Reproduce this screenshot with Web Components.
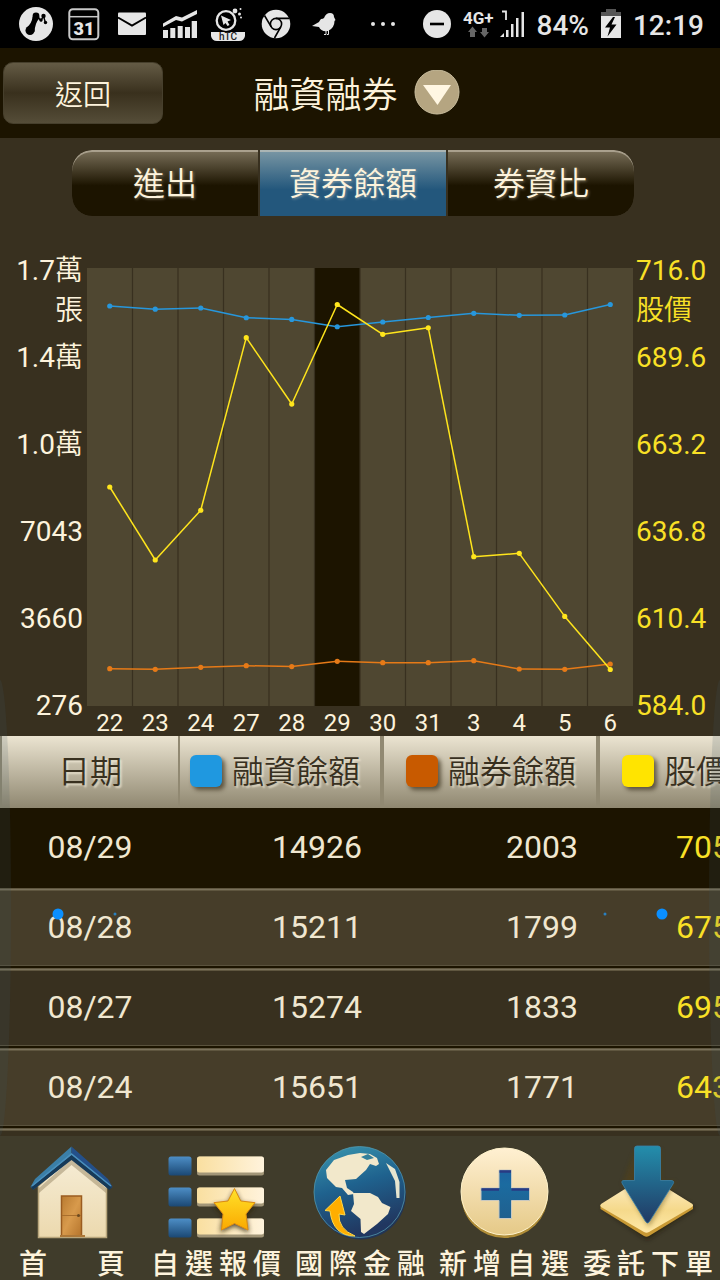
<!DOCTYPE html>
<html lang="zh-Hant">
<head>
<meta charset="utf-8">
<meta name="viewport" content="width=device-width, initial-scale=1">
<title>融資融券</title>
<style>
    html, body {
        margin: 0;
        padding: 0;
    }

    body {
        --cream: #fdf3dc;
        --dark: #1c1400;
        --page: #38301f;
        --margin-color: #1f98e0;
        --short-color: #c85a00;
        --price-color: #ffe400;
        background: var(--page);
        color: var(--cream);
        font-family: Roboto, "Noto Sans CJK TC", sans-serif;
    }
</style>
</head>
<body>

<stock-app>
    <status-bar slot="status"></status-bar>

    <page-header slot="header">
        <span slot="back">返回</span>
        <span slot="title">融資融券</span>
    </page-header>

    <tab-bar slot="tabs">
        <tab-button>進出</tab-button>
        <tab-button selected>資券餘額</tab-button>
        <tab-button>券資比</tab-button>
    </tab-bar>

    <balance-chart slot="chart"></balance-chart>
    <balance-table slot="table"></balance-table>

    <nav-bar slot="nav">
        <nav-item icon="home" short>首 頁</nav-item>
        <nav-item icon="list">自選報價</nav-item>
        <nav-item icon="globe">國際金融</nav-item>
        <nav-item icon="plus">新增自選</nav-item>
        <nav-item icon="order">委託下單</nav-item>
    </nav-bar>
</stock-app>


<template id="stock-app-template">
    <style>
        :host {
            display: flex;
            flex-direction: column;
            min-height: 100vh;
            position: relative;
            overflow: hidden;
        }

        .list {
            flex: 1 1 0;
            min-height: 400px;
            overflow: hidden;
        }

        /* edge glow and dots that float over the list */
        .glow {
            position: absolute;
            top: 680px;
            width: 22px;
            height: 456px;
            border-radius: 50%;
            background: rgba(60, 90, 100, 0.16);
            pointer-events: none;
        }

        .glow.left { left: -11px; }
        .glow.right { right: -11px; }

        .dot {
            position: absolute;
            top: 914px;
            width: 11px;
            height: 11px;
            border-radius: 50%;
            background: #0a8fff;
            transform: translate(-50%, -50%);
            pointer-events: none;
        }

        .dot.small {
            width: 3px;
            height: 3px;
            background: #2a80c0;
        }
    </style>

    <slot name="status"></slot>
    <slot name="header"></slot>
    <slot name="tabs"></slot>
    <slot name="chart"></slot>
    <div class="list"><slot name="table"></slot></div>
    <slot name="nav"></slot>

    <div class="glow left"></div>
    <div class="glow right"></div>
    <div class="dot" style="left: 8%"></div>
    <div class="dot small" style="left: 16%"></div>
    <div class="dot small" style="left: 84%"></div>
    <div class="dot" style="left: 92%"></div>
</template>


<template id="status-bar-template">
    <style>
        :host {
            display: flex;
            align-items: center;
            justify-content: space-between;
            height: 48px;
            padding: 0 16px 0 18px;
            background: #000;
            color: #e6e6e6;
            font-size: 28px;
            line-height: 44px;
            font-weight: 500;
        }

        .group {
            display: flex;
            align-items: center;
            gap: 12px;
        }

        .group span { padding-top: 4px; }
        .dots { margin-right: 16px; }
        svg { display: block; fill: #e6e6e6; }
    </style>

    <div class="group">
        <svg width="36" height="36" viewBox="0 0 36 36">
            <circle cx="18" cy="18" r="17"/>
            <path d="M8.500 22 Q14 17 14.500 11 Q16 8 20.500 8 L21.500 12 Q17 17 16.500 26Z" fill="#000"/>
            <path d="M18 9.500 L23 14.500 L25.500 10 L27.500 17" fill="none" stroke="#000" stroke-width="1.400"/>
            <circle cx="12" cy="24.500" r="4.500" fill="#000"/>
            <circle cx="18" cy="10" r="3.400" fill="#000"/>
            <circle cx="23" cy="14" r="1.700" fill="#000"/>
            <circle cx="25.500" cy="10" r="2.200" fill="#000"/>
            <circle cx="27.500" cy="16.500" r="1.700" fill="#000"/>
        </svg>
        <svg width="36" height="36" viewBox="0 0 36 36">
            <rect x="3.300" y="3.300" width="29" height="30" rx="3.500" fill="none" stroke="#c8c8c8" stroke-width="2"/>
            <path d="M3 10.700H33" stroke="#c8c8c8" stroke-width="1.500"/>
            <text x="18" y="29" text-anchor="middle" font-family="Roboto" font-size="18" font-weight="900">31</text>
        </svg>
        <svg width="36" height="36" viewBox="0 0 36 36">
            <rect x="4" y="6.500" width="28" height="22.500" rx="1"/>
            <path d="M4 11.500 L18 19.500 L32 11.500" fill="none" stroke="#000" stroke-width="2"/>
        </svg>
        <svg width="36" height="36" viewBox="0 0 36 36">
            <path d="M1 24h5v8H1z M8.300 22h5v10h-5z M15.700 20h5v12h-5z M23 21h5v11h-5z M29.700 15h5.300v17h-5.300z"/>
            <path d="M1 17.500 L14 10 L20 11.500 L35 4 V8 L20 15.500 L14 14 L1 21Z"/>
        </svg>
        <svg width="36" height="36" viewBox="0 0 36 36">
            <circle cx="16" cy="14.500" r="9.300" fill="none" stroke="#e6e6e6" stroke-width="2.300"/>
            <path d="M11 9.500 L21 14 L17.500 15.500 L19.500 19 L17.500 20 L15.500 17 L13.500 19Z"/>
            <circle cx="25" cy="5" r="2.400"/>
            <circle cx="29.500" cy="8" r="1.500"/>
            <circle cx="30.500" cy="3" r="1"/>
            <circle cx="31" cy="11.500" r="1"/>
            <path d="M1 26H35V30Q34 35 29 35H7Q2 35 1 30Z"/>
            <text x="18" y="34" text-anchor="middle" font-family="Roboto" font-size="10" font-weight="500" fill="#222">hTC</text>
        </svg>
        <svg width="36" height="36" viewBox="0 0 36 36">
            <circle cx="18" cy="18" r="14.300"/>
            <circle cx="18" cy="18" r="5.600" fill="none" stroke="#000" stroke-width="1.600"/>
            <path d="M18 12.400H31.500 M13.200 20.800L6.500 9.500 M22.800 20.800L16.500 32" stroke="#000" stroke-width="1.600"/>
        </svg>
        <svg width="36" height="36" viewBox="0 0 36 36">
            <path d="M6 20 L13 16 Q14 14 15 13 Q17 13 18 12 Q20 7 24 7 Q28 7 28 11 L29.500 14 L28.500 15 Q28.500 22 22 25 Q15 26 13 21Z"/>
            <path d="M20 24V28.500H18 M22.500 24V28.500H21" fill="none" stroke="#e6e6e6"/>
        </svg>
    </div>

    <div class="group">
        <svg class="dots" width="24" height="36" viewBox="0 0 24 36">
            <circle cx="2" cy="18" r="2"/><circle cx="12" cy="18" r="2"/><circle cx="22" cy="18" r="2"/>
        </svg>
        <svg width="28" height="28" viewBox="0 0 28 28">
            <circle cx="14" cy="14" r="14"/>
            <path d="M7 14H21" stroke="#000" stroke-width="2.600"/>
        </svg>
        <svg width="62" height="36" viewBox="0 0 62 36">
            <text x="0" y="18" font-family="Roboto" font-size="17" font-weight="700">4G+</text>
            <path d="M9.500 20.500 L14 26H12V31H7V26H5Z M21.500 31.500 L17 26H19V22H24V26H26Z" fill="#666"/>
            <path d="M39 5.500H43V14" fill="none" stroke="#e6e6e6" stroke-width="1.800"/>
            <path d="M37 31 L41 27V31Z M43 24h2.500v7H43z M48 18h2.500v13H48z M53 12h2.500v19H53z M58.500 6h2.500v25h-2.500z"/>
        </svg>
        <span>84%</span>
        <svg width="20" height="30" viewBox="0 0 20 30">
            <path d="M0 3H5V0H15V3H20V7H0Z" fill="#555"/>
            <path d="M0 7H20V29H0Z"/>
            <path d="M12 8 L4 18.500H9L6.500 27.500 L15.500 15.500H10.500L14 8Z" fill="#000"/>
        </svg>
        <span>12:19</span>
    </div>
</template>


<template id="page-header-template">
    <style>
        :host {
            display: grid;
            grid-template-columns: 1fr auto 1fr;
            align-items: center;
            height: 90px;
            padding: 0 10px 0 3px;
            box-sizing: border-box;
            background: var(--dark);
        }

        button {
            margin: 0;
            padding: 0;
            border: 0;
            color: inherit;
            font: inherit;
        }

        .back {
            justify-self: start;
            width: 160px;
            height: 62px;
            border: 1px solid #463f2c;
            border-radius: 10px;
            background: linear-gradient(#645b45, #39301d 50%, #554d38);
            font-size: 28px;
            font-weight: 350;
        }

        .title {
            display: flex;
            align-items: center;
            gap: 16px;
        }

        h1 {
            margin: 0;
            padding-top: 6px;
            font-size: 36px;
            line-height: 48px;
            font-weight: 350;
        }

        .menu {
            display: block;
            width: 46px;
            height: 46px;
            background: none;
        }

        svg { display: block; }
    </style>

    <button class="back"><slot name="back"></slot></button>
    <div class="title">
        <h1><slot name="title"></slot></h1>
        <button class="menu" aria-label="選單">
            <svg width="46" height="46" viewBox="0 0 46 46">
                <circle cx="23" cy="22" r="22" fill="#b5a581" stroke="#cbbf9f" stroke-width="1"/>
                <path d="M9 15H37L23.500 35Z" fill="#fff6e2"/>
            </svg>
        </button>
    </div>
</template>


<template id="tab-bar-template">
    <style>
        :host {
            display: flex;
            gap: 2px;
            margin: 12px 86px 0 72px;
            border-radius: 20px;
            overflow: hidden;
        }
    </style>
    <slot></slot>
</template>


<template id="tab-button-template">
    <style>
        :host {
            display: block;
            flex: 1 1 0;
        }

        button {
            display: block;
            width: 100%;
            height: 66px;
            margin: 0;
            padding: 0 0 4px;
            border: 0;
            background: linear-gradient(#7a705a, var(--dark) 54%);
            box-shadow: inset 0 2px 0 rgba(220, 212, 195, 0.5);
            color: inherit;
            font: inherit;
            font-size: 32px;
            font-weight: 350;
            text-shadow: 1px 1px 3px rgba(253, 243, 220, 0.4);
        }

        :host(:first-child) button { border-radius: 20px 0 0 20px; }
        :host(:last-child) button { border-radius: 0 20px 20px 0; }

        :host([selected]) button {
            background: linear-gradient(#7b98a5, #23577c 60%);
        }
    </style>
    <button><slot></slot></button>
</template>


<template id="balance-chart-template">
    <style>
        :host {
            display: grid;
            grid-template-columns: 87px 1fr 87px;
            height: 486px;
            margin-top: 34px;
        }

        .axis {
            display: grid;
            grid-auto-rows: 87px;
            align-content: start;
            height: 475px;
            padding-top: 1px;
            font-size: 28px;
            line-height: 40px;
        }

        .axis span { display: block; }
        .axis b { font-weight: 350; }
        .left { padding-right: 4px; text-align: right; }
        .right { padding-left: 3px; color: #f9e026; }

        .plot { padding-top: 18px; }

        svg {
            display: block;
            width: 100%;
            height: 438px;
            background: #4f4731;
        }

        .days {
            display: flex;
            font-size: 24px;
            line-height: 34px;
        }

        .days span {
            flex: 1 1 0;
            text-align: center;
        }
    </style>

    <div class="axis left">
        <div><span>1.7<b>萬</b></span><span><b>張</b></span></div>
        <div>1.4<b>萬</b></div>
        <div>1.0<b>萬</b></div>
        <div>7043</div>
        <div>3660</div>
        <div>276</div>
    </div>
    <div class="plot">
        <svg></svg>
        <div class="days"></div>
    </div>
    <div class="axis right">
        <div><span>716.0</span><span><b>股價</b></span></div>
        <div>689.6</div>
        <div>663.2</div>
        <div>636.8</div>
        <div>610.4</div>
        <div>584.0</div>
    </div>
</template>


<template id="balance-table-template">
    <style>
        :host {
            display: block;
        }

        table {
            width: calc(100% + 30px);
            table-layout: fixed;
            border-collapse: separate;
            border-spacing: 0;
            font-size: 32px;
        }

        th, td {
            box-sizing: border-box;
            padding: 0;
        }

        th {
            height: 72px;
            padding: 0 20px 6px 0;
            border-left: 2px solid #918972;
            border-right: 2px solid #918972;
            background: linear-gradient(#ebe4d1, #8f8770);
            color: #38301f;
            font-weight: 350;
            text-shadow: 2px 2px 2px rgba(255, 248, 230, 0.6);
        }

        th:first-child {
            padding: 0 0 6px;
            border-right: 0;
        }

        .legend {
            display: flex;
            align-items: center;
            justify-content: flex-end;
            gap: 10px;
            white-space: nowrap;
        }

        .legend i {
            flex: none;
            width: 32px;
            height: 32px;
            margin-top: 4px;
            border-radius: 6px;
            box-shadow: 3px 3px 4px rgba(40, 30, 10, 0.6);
        }

        td {
            height: 80px;
            padding: 0 20px 2px 0;
            background:
                linear-gradient(#5f563f 1px, #7a715b 1px, #7a715b 2px, #5f563f 2px, #5f563f 3px, transparent 3px),
                linear-gradient(to top, var(--dark) 2px, #5a523d 2px, #5a523d 3px, transparent 3px);
            color: #f0e7d0;
            text-align: right;
        }

        td:first-child {
            padding: 0 0 2px 2px;
            text-align: center;
        }

        td:last-child { color: #f9e026; }

        tr { background: var(--page); }
        tr:nth-child(even) { background: #463d29; }
        tr.current { background: var(--dark); }
        tr.current td { background: none; }
    </style>

    <table>
        <colgroup>
            <col style="width: 178px">
            <col style="width: 204px">
            <col style="width: 216px">
            <col>
        </colgroup>
        <thead>
            <tr>
                <th>日期</th>
                <th><div class="legend"><i style="background: var(--margin-color)"></i>融資餘額</div></th>
                <th><div class="legend"><i style="background: var(--short-color)"></i>融券餘額</div></th>
                <th><div class="legend"><i style="background: var(--price-color)"></i>股價</div></th>
            </tr>
        </thead>
        <tbody></tbody>
    </table>
</template>


<template id="nav-bar-template">
    <style>
        :host {
            display: flex;
            padding-top: 6px;
            background: #403c2b;
        }
    </style>
    <slot></slot>
</template>


<template id="nav-item-template">
    <style>
        :host {
            display: block;
            flex: 1 1 0;
            min-width: 0;
        }

        a {
            display: flex;
            flex-direction: column;
            align-items: center;
            color: inherit;
            text-decoration: none;
        }

        svg {
            display: block;
            width: 100%;
            height: 104px;
        }

        span {
            width: 130px;
            height: 34px;
            font-size: 28px;
            line-height: 38px;
            font-weight: 500;
            text-align: justify;
            text-align-last: justify;
            white-space: nowrap;
        }

        :host([short]) span { width: 106px; }
    </style>
    <a href="#"><svg viewBox="0 0 144 104"></svg><span><slot></slot></span></a>
</template>


<script>
    // one entry per trading day, oldest first
    const DAYS = [
        {date: "08/22", margin: 15728, short: 1717, price: 650},
        {date: "08/23", margin: 15604, short: 1694, price: 628},
        {date: "08/24", margin: 15651, short: 1771, price: 643},
        {date: "08/27", margin: 15274, short: 1833, price: 695},
        {date: "08/28", margin: 15211, short: 1799, price: 675},
        {date: "08/29", margin: 14926, short: 2003, price: 705},
        {date: "08/30", margin: 15110, short: 1949, price: 696},
        {date: "08/31", margin: 15284, short: 1949, price: 698},
        {date: "09/03", margin: 15446, short: 2026, price: 629},
        {date: "09/04", margin: 15369, short: 1705, price: 630},
        {date: "09/05", margin: 15380, short: 1694, price: 611},
        {date: "09/06", margin: 15786, short: 1898, price: 595}
    ];
    const CURRENT = 5;

    const ICONS = {
        home: `
            <defs>
                <linearGradient id="wall" x2="0" y2="1"><stop stop-color="#f6edd6"/><stop offset="1" stop-color="#ecd9ae"/></linearGradient>
                <linearGradient id="door" x2="1" y2="1"><stop stop-color="#b87a30"/><stop offset="0.5" stop-color="#d89a4c"/><stop offset="1" stop-color="#b5742c"/></linearGradient>
            </defs>
            <path d="M38.500 44 L71.500 14 L106.500 44V95.500H38.500Z" fill="url(#wall)" stroke="#b9a67c" stroke-width="1.500"/>
            <path d="M39 46 L71.500 17 L106 46 V51 L71.500 23 L39 51Z" fill="#8d7c58" opacity="0.45"/>
            <path d="M71.500 4.500 L35 37 L30.500 45 L33.500 47.500 L71.500 17Z" fill="#3b7fa8"/>
            <path d="M71.500 4.500 L108 37 L112.500 45 L109.500 47.500 L71.500 17Z" fill="#24508a"/>
            <path d="M31 45 L71.500 13 L112 45 L109.500 48 L71.500 18 L33 48Z" fill="#173a58"/>
            <path d="M32 44 L71.500 12 L111 44" fill="none" stroke="#4b91bd" stroke-width="1.500"/>
            <rect x="61.500" y="54" width="20" height="40" fill="url(#door)" stroke="#9a5c20" stroke-width="1.500"/>
            <path d="M62 73.500H81" stroke="#a96e2c"/>
            <path d="M60 94H85" stroke="#ad7838" stroke-width="2"/>
            <circle cx="78.500" cy="73.500" r="1.500" fill="#6c4a20"/>`,
        list: `
            <defs>
                <linearGradient id="box" x2="0" y2="1"><stop stop-color="#4d8ec6"/><stop offset="1" stop-color="#1b4874"/></linearGradient>
                <linearGradient id="bar"><stop stop-color="#f9dfa0"/><stop offset="1" stop-color="#fff3dc"/></linearGradient>
                <linearGradient id="star" x2="0" y2="1"><stop stop-color="#ffe22a"/><stop offset="1" stop-color="#fba900"/></linearGradient>
                <filter id="blur"><feGaussianBlur stdDeviation="2.500"/></filter>
            </defs>` +
            [14.5, 45.5, 76.5].map(y => `
                <rect x="24.500" y="${y}" width="23" height="19" rx="2.500" fill="url(#box)"/>
                <rect x="53" y="${y}" width="67" height="19" rx="2.500" fill="#a29678"/>
                <rect x="53" y="${y}" width="67" height="16" rx="2.500" fill="url(#bar)"/>`).join("") + `
            <path d="M90.500 48 L97 61 L112 63 L102 74 L105 91 L90.500 84 L76 91 L79 74 L69 63 L84 61Z" fill="#2a200a" opacity="0.8" filter="url(#blur)"/>
            <path d="M90.500 46.500 L96.700 59 L111 60.700 L102 72 L104 88 L90.500 81.500 L77.500 88 L79 72 L70 60.700 L84 59Z" fill="url(#star)" stroke="#dc8b12" stroke-width="1" stroke-linejoin="round"/>`,
        globe: `
            <defs>
                <linearGradient id="sea" x2="0.3" y2="1"><stop stop-color="#3b98b0"/><stop offset="0.5" stop-color="#1f628e"/><stop offset="1" stop-color="#213760"/></linearGradient>
            </defs>
            <circle cx="72.500" cy="52" r="45.500" fill="#213556"/>
            <circle cx="71.500" cy="50" r="45.500" fill="url(#sea)" stroke="#5297ac" stroke-width="0.800"/>
            <path d="M60 13 L72 11 L82 12 L89 16 L91 22 L88 24 L82 22 L78 28 L68 37 L57 38 L59 46 L65 50 L66 52 L60 53 L54 46 L48 45 L39 36 L38 28 L46 18Z" fill="#f2e8cb"/>
            <path d="M73 15 L80 12 L86 16 L79 18Z" fill="#34809b"/>
            <path d="M65 51 L82 51 L90 55 L94 61 L102.500 65 L100 72 L89 82 L76 92 L73 90 L72.500 77 L63 69 L66 62Z" fill="#f2e8cb"/>
            <path d="M98 21 L107 27 L111.500 40 L111.500 56 L108.500 56 L107 39Z" fill="#e7e6d0"/>
            <path d="M52 54 L57 73 L51 72 Q50 87 67 94 Q45 94 42 69 L37 68.500Z" fill="#ffae00" stroke="#ffd84a" stroke-width="1"/>`,
        plus: `
            <defs>
                <linearGradient id="coin" x2="0" y2="1"><stop stop-color="#fff0d2"/><stop offset="1" stop-color="#e5c987"/></linearGradient>
                <linearGradient id="cross" x2="0" y2="1"><stop stop-color="#1d63a0"/><stop offset="0.300" stop-color="#1b6ba0"/><stop offset="1" stop-color="#20608e"/></linearGradient>
            </defs>
            <circle cx="72.500" cy="52.500" r="43.500" fill="#b08d38"/>
            <circle cx="72.500" cy="49.500" r="43.500" fill="url(#coin)" stroke="#fff3cc" stroke-width="1"/>
            <path d="M67 28H79.500V46H97.500V58.500H79.500V76.500H67V58.500H49V46H67Z" fill="url(#cross)" stroke="#c9c8c0" stroke-width="1"/>
            <path d="M67.500 29.500H79 M49.500 47.500H67 M79.500 47.500H97" stroke="#283a83" stroke-width="2.500"/>`,
        order: `
            <defs>
                <linearGradient id="plate" x2="0" y2="1"><stop stop-color="#fff0d0"/><stop offset="0.600" stop-color="#f5d98b"/><stop offset="1" stop-color="#ffe9a8"/></linearGradient>
                <linearGradient id="arrow" x2="0" y2="1"><stop stop-color="#238eac"/><stop offset="1" stop-color="#213964"/></linearGradient>
                <filter id="blur"><feGaussianBlur stdDeviation="2.500"/></filter>
            </defs>
            <path d="M26 66 L71 36 L119 66 L71 98Z" fill="#1c1400" opacity="0.6" filter="url(#blur)"/>
            <path d="M24.500 63H117V67L73 94Q70.500 95.500 68 94L24.500 67Z" fill="#c89934"/>
            <path d="M25 62 L68 35 Q70.500 33 73 35 L116.500 62 Q118 63.500 116 65 L73 90 Q70.500 91.500 68 90 L25 65 Q23.500 63.500 25 62Z" fill="url(#plate)"/>
            <path d="M60 8H85V40H100L73 85L47 42Z" fill="#5a4210" opacity="0.45" filter="url(#blur)"/>
            <path d="M61 4H82Q84.500 4 84.500 6.500V38.500H95Q99 38.500 97 42L73.500 79.500Q71.500 82.500 69.500 79.500L46.500 42Q44.500 38.500 48 38.500H58.500V6.500Q58.500 4 61 4Z" fill="url(#arrow)" stroke="#3a82a8" stroke-width="0.800"/>`
    };

    class TemplateElement extends HTMLElement {

        constructor() {
            super();

            let template = document.querySelector("#" + this.localName + "-template");
            this.shadow = this.attachShadow({mode: "open"});
            this.shadow.appendChild(template.content.cloneNode(true));
        }
    }

    class BalanceChartElement extends TemplateElement {

        connectedCallback() {
            let step = 100 / DAYS.length;
            let x = i => (i + 0.5) * step + "%";
            let out = `<rect x="${CURRENT * step}%" width="${step}%" height="100%" fill="#1c1400"/>`;

            for (let i = 1; i < DAYS.length; i++) {
                out += `<line x1="${i * step}%" x2="${i * step}%" y1="0" y2="100%" stroke="#38301f" stroke-width="1.2"/>`;
            }

            out += this.series("margin", 276, 17196, "#2797dc", x);
            out += this.series("short", 276, 17196, "#e67a17", x);
            out += this.series("price", 584, 716, "#ffe51c", x);
            this.shadow.querySelector("svg").innerHTML = out;

            this.shadow.querySelector(".days").innerHTML = DAYS
                .map(d => `<span>${Number(d.date.split("/")[1])}</span>`)
                .join("");
        }

        series(key, min, max, color, x) {
            let y = d => (max - d[key]) / (max - min) * 100 + "%";
            let lines = "";
            let dots = "";

            DAYS.forEach(function(d, i) {
                if (i > 0) {
                    lines += `<line x1="${x(i - 1)}" y1="${y(DAYS[i - 1])}" x2="${x(i)}" y2="${y(d)}" stroke="${color}" stroke-width="1.5"/>`;
                }
                dots += `<circle cx="${x(i)}" cy="${y(d)}" r="2.600" fill="${color}"/>`;
            });

            return lines + dots;
        }
    }

    class BalanceTableElement extends TemplateElement {

        connectedCallback() {
            // newest first, from the selected day back
            let rows = DAYS.slice(2, CURRENT + 1).reverse()
                .map((d, i) => `<tr class="${i == 0 ? "current" : ""}">
                    <td>${d.date}</td><td>${d.margin}</td><td>${d.short}</td><td>${d.price}</td>
                </tr>`);
            rows.push("<tr><td></td><td></td><td></td><td></td></tr>");
            this.shadow.querySelector("tbody").innerHTML = rows.join("");
        }
    }

    class NavItemElement extends TemplateElement {

        connectedCallback() {
            this.shadow.querySelector("svg").innerHTML = ICONS[this.getAttribute("icon")];
        }
    }

    customElements.define("stock-app", class extends TemplateElement {});
    customElements.define("status-bar", class extends TemplateElement {});
    customElements.define("page-header", class extends TemplateElement {});
    customElements.define("tab-bar", class extends TemplateElement {});
    customElements.define("tab-button", class extends TemplateElement {});
    customElements.define("balance-chart", BalanceChartElement);
    customElements.define("balance-table", BalanceTableElement);
    customElements.define("nav-bar", class extends TemplateElement {});
    customElements.define("nav-item", NavItemElement);
</script>

</body>
</html>
